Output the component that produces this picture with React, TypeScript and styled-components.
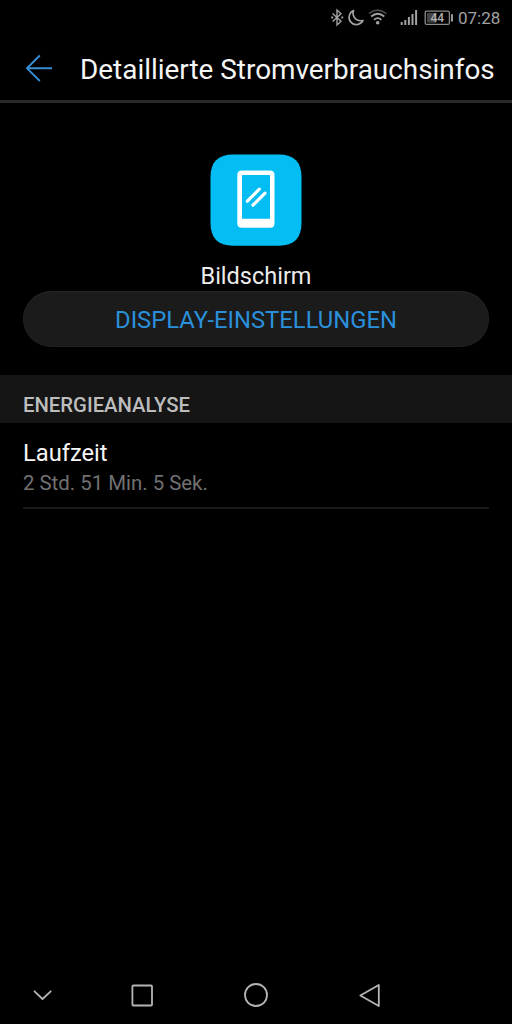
import React from "react";
import styled, { createGlobalStyle } from "styled-components";

const GlobalStyle = createGlobalStyle`
  body { margin: 0; background: #000; }
  * { box-sizing: border-box; }
  svg { display: block; flex: none; }
`;

const Screen = styled.div`
  width: 512px;
  height: 1024px;
  display: flex;
  flex-direction: column;
  background: #000;
  color: #f5f5f5;
  font-family: Roboto, "Liberation Sans", sans-serif;
  overflow: hidden;
`;

const StatusBar = styled.div`
  height: 36px;
  flex: none;
  display: flex;
  align-items: center;
  justify-content: flex-end;
  padding-right: 11px;
`;

const Clock = styled.span`
  width: 43px;
  margin-left: 4px;
  font-size: 17px;
  line-height: 36px;
  color: #a2a2a2;
  white-space: nowrap;
`;

const Header = styled.header`
  height: 67px;
  flex: none;
  display: flex;
  align-items: center;
  padding-left: 24px;
  border-bottom: 3px solid #292929;
`;

const Title = styled.h1`
  margin: 4px 0 0 26px;
  font-size: 27.9px;
  line-height: 34px;
  font-weight: 400;
  white-space: nowrap;
`;

const Summary = styled.section`
  display: flex;
  flex-direction: column;
  align-items: center;
  padding: 51px 23px 28px;
`;

const AppName = styled.div`
  margin-top: 16px;
  font-size: 23.5px;
  line-height: 28px;
  color: #ececec;
`;

const PillButton = styled.button`
  width: 100%;
  height: 56px;
  margin-top: 1px;
  padding: 2px 0 0;
  border: 1px solid #202020;
  border-top-color: #262626;
  border-radius: 28px;
  background: #1b1b1b;
  color: #2b90dc;
  font: 400 23.8px/52px Roboto, "Liberation Sans", sans-serif;
`;

const SectionHeading = styled.h2`
  height: 48px;
  flex: none;
  margin: 0;
  padding: 6px 23px 0;
  background: #151515;
  color: #bdbdbd;
  font-size: 20.3px;
  line-height: 48px;
  font-weight: 500;
`;

const Row = styled.div`
  height: 86px;
  margin: 0 23px;
  padding-top: 16px;
  border-bottom: 2px solid #191919;
`;

const RowLabel = styled.div`
  font-size: 23.7px;
  line-height: 28px;
`;

const RowValue = styled.div`
  margin-top: 3px;
  font-size: 20.4px;
  line-height: 26px;
  color: #717171;
`;

const NavBar = styled.nav`
  height: 58px;
  margin-top: auto;
  flex: none;
  display: grid;
  grid-template-columns: 85px 115px 112px 115px;
  align-items: center;
  justify-items: center;
`;

const StatusIcons = () => (
  <svg width="126" height="36" viewBox="328 0 126 36" fill="none" stroke="#a2a2a2">
    <path d="M332.6 13.6 341 21.3 337 25V10l4 3.7-8.4 7.7" strokeWidth="1.4" />
    <path d="M331.2 17.5h1.9M341.3 17.5h1.9" strokeWidth="1.9" />
    <path
      d="M353.6 10.6A7.3 7.3 0 1 0 363 20.4C357.2 22.2 351.4 17 353.6 10.6Z"
      strokeWidth="1.6"
      strokeLinejoin="round"
    />
    <path d="M368.9 13.6Q377.5 6.6 386.4 13.6" stroke="#4c4c4c" strokeWidth="1.6" />
    <path d="M371.1 16.5Q377.7 11 384.3 16.5M374 19.8Q377.7 16.6 381.4 19.8" strokeWidth="1.7" />
    <circle cx="377.7" cy="22.7" r="1.8" fill="#a2a2a2" stroke="none" />
    <path d="M401.7 25v-3M405.3 25v-5M408.9 25v-8M412.5 25V14M416.1 25V10" strokeWidth="2" />
    <rect x="425.2" y="11.2" width="24.2" height="13.2" rx="1.5" stroke="#8c8c8c" strokeWidth="1.3" />
    <rect x="427" y="13" width="9.5" height="9.6" fill="#454545" stroke="none" />
    <path d="M452 14.2v7.4" strokeWidth="1.9" />
    <text
      x="437.2"
      y="22.1"
      textAnchor="middle"
      fontFamily="Roboto, sans-serif"
      fontSize="12"
      fontWeight="500"
      fill="#b0b0b0"
      stroke="none"
    >
      44
    </text>
  </svg>
);

const BackArrow = () => (
  <svg width="30" height="30" viewBox="24 53 30 30" fill="none" stroke="#368fd6" strokeWidth="1.9">
    <path d="M52 68.3H27M39.8 55.5 27 68.3 39.8 81" />
  </svg>
);

const DisplayIcon = () => (
  <svg width="92" height="92" viewBox="0 0 92 92">
    <path
      d="M23 .5H69C84 .5 91.5 8 91.5 23V69C91.5 84 84 91.7 69 91.7H23C8 91.7.5 84 .5 69V23C.5 8 8 .5 23 .5Z"
      fill="#03bdf3"
    />
    <path
      fillRule="evenodd"
      d="M31.8 16.4H60.2Q64.5 16.4 64.5 20.9V69.2Q64.5 73.7 60.2 73.7H31.8Q27.3 73.7 27.3 69.2V20.9Q27.3 16.4 31.8 16.4ZM32 20.9V64.7H60V20.9Z"
      fill="#fff"
    />
    <path d="m37.3 47.2 12-12M43 51.2l12-12" stroke="#fff" strokeWidth="3.2" strokeLinecap="round" />
  </svg>
);

const NavIcon = styled.svg.attrs({ fill: "none", stroke: "#b5b5b5" })`
  stroke-width: 1.8;
  stroke-linejoin: round;
  stroke-linecap: round;
`;

export default function App() {
  return (
    <>
      <GlobalStyle />
      <Screen>
        <StatusBar>
          <StatusIcons />
          <Clock>07:28</Clock>
        </StatusBar>
        <Header>
          <BackArrow />
          <Title>Detaillierte Stromverbrauchsinfos</Title>
        </Header>
        <Summary>
          <DisplayIcon />
          <AppName>Bildschirm</AppName>
          <PillButton>DISPLAY-EINSTELLUNGEN</PillButton>
        </Summary>
        <SectionHeading>ENERGIEANALYSE</SectionHeading>
        <Row>
          <RowLabel>Laufzeit</RowLabel>
          <RowValue>2 Std. 51 Min. 5 Sek.</RowValue>
        </Row>
        <NavBar>
          <NavIcon width="29" height="29" viewBox="28 981 29 29">
            <path d="m34.5 991.3 8 7.7 8.2-7.7" />
          </NavIcon>
          <NavIcon width="29" height="29" viewBox="128 981 29 29">
            <rect x="132.4" y="985.5" width="19.6" height="20" rx="1" />
          </NavIcon>
          <NavIcon width="30" height="30" viewBox="241 980.5 30 30">
            <circle cx="256" cy="995.5" r="11" />
          </NavIcon>
          <NavIcon width="29" height="29" viewBox="355 981 29 29">
            <path d="M378.8 985v21L360.3 995.5Z" />
          </NavIcon>
        </NavBar>
      </Screen>
    </>
  );
}
